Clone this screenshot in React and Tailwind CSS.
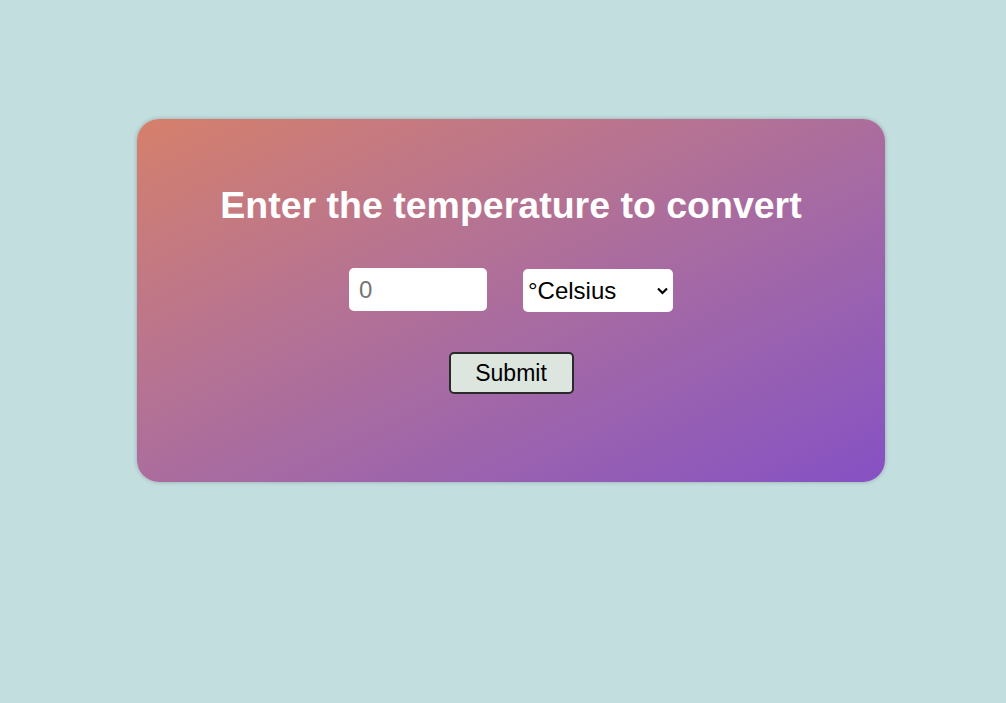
import React from 'react'

export default function App() {
  return (
    <div className="min-h-screen w-full bg-[#c3dedf] font-['Liberation_Sans',Arial,sans-serif] pt-[119px] pl-[137px]">
      <div className="w-[748px] h-[363px] rounded-[22px] bg-gradient-to-br from-[#d6806a] to-[#8650c4] shadow-[0_0_4px_rgba(0,0,0,0.25)] flex flex-col items-center pt-[62px]">
        <h1 className="text-[37.5px] font-bold text-white leading-[48px]">Enter the temperature to convert</h1>
        <form className="flex flex-col items-center" onSubmit={(e) => e.preventDefault()}>
          <div className="flex items-start gap-[36px] mt-[39px]">
            <input
              type="number"
              placeholder="0"
              className="w-[138px] h-[43px] rounded-[5px] bg-white px-[10px] text-[24px] text-black placeholder:text-[#757575] outline-none"
            />
            <div className="relative mt-[1px]">
              <select className="w-[150px] h-[43px] rounded-[5px] bg-white pl-[5px] text-[24px] text-black outline-none appearance-none">
                <option>°Celsius</option>
                <option>°Fahrenheit</option>
                <option>Kelvin</option>
              </select>
              <svg
                className="absolute right-[5px] top-[18px] pointer-events-none"
                width="11"
                height="8"
                viewBox="0 0 11 8"
                fill="none"
              >
                <path d="M1 1.5 L5.5 6 L10 1.5" stroke="#000" strokeWidth="2.2" />
              </svg>
            </div>
          </div>
          <button
            type="submit"
            className="mt-[40px] w-[125px] h-[42px] rounded-[5px] border-2 border-[#2a2a2a] bg-[#dce5de] text-[23px] text-black"
          >
            Submit
          </button>
        </form>
      </div>
    </div>
  )
}
